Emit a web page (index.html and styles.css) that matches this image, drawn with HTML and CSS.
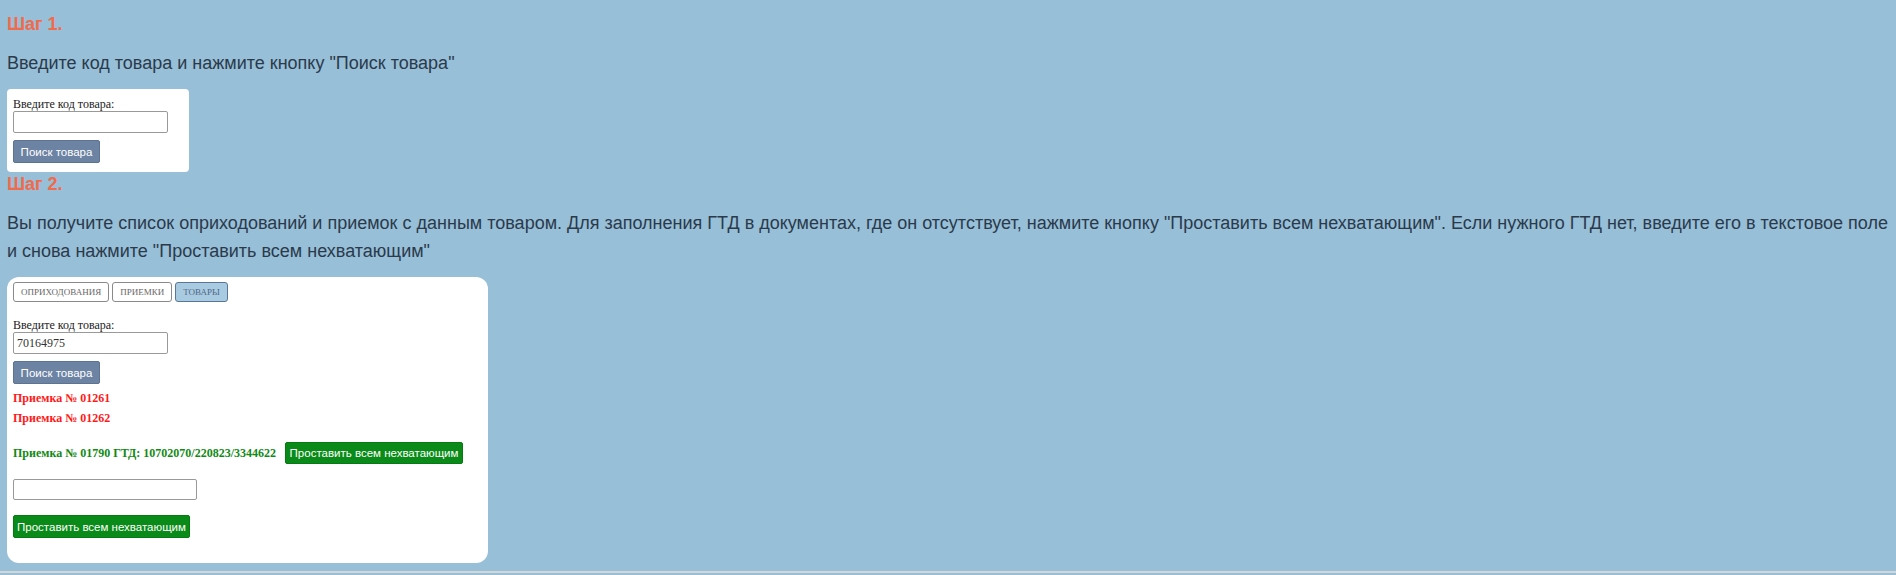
FILE: index.html
```html
<html>
<head>
	<meta http-equiv="Content-Type" content="text/html; charset=utf-8" />
	<title>ГТД</title>
	<link rel="stylesheet" href="styles.css">
</head>
<body>
	<div class="page">
		<div class="step">Шаг 1.</div>
		<div class="hint">Введите код товара и нажмите кнопку "Поиск товара"</div>
		<div class="box box-small">
			<div class="label">Введите код товара:</div>
			<input class="field" type="text" value="">
			<div><button class="btn btn-search">Поиск товара</button></div>
		</div>

		<div class="step step-two">Шаг 2.</div>
		<div class="hint">Вы получите список оприходований и приемок с данным товаром. Для заполнения ГТД в документах, где он отсутствует, нажмите кнопку "Проставить всем нехватающим". Если нужного ГТД нет, введите его в текстовое поле и снова нажмите "Проставить всем нехватающим"</div>
		<div class="box box-big">
			<div class="tabs">
				<div class="tab">Оприходования</div>
				<div class="tab">Приемки</div>
				<div class="tab active">Товары</div>
			</div>
			<div class="label label-gap">Введите код товара:</div>
			<input class="field" type="text" value="70164975">
			<div><button class="btn btn-search">Поиск товара</button></div>

			<div class="doc doc-missing first">Приемка № 01261</div>
			<div class="doc doc-missing">Приемка № 01262</div>
			<div class="doc-row">
				<span class="doc doc-ok">Приемка № 01790 ГТД: 10702070/220823/3344622</span>
				<button class="btn btn-green btn-row">Проставить всем нехватающим</button>
			</div>
			<input class="field field-gtd" type="text" value="">
			<div><button class="btn btn-green btn-all">Проставить всем нехватающим</button></div>
		</div>
	</div>
	<div class="rule"></div>
</body>
</html>
```

FILE: styles.css
```css
body {
	margin: 0;
	background: #97bfd8;
	font-family: 'Liberation Sans', Arial, sans-serif;
}
.page {
	padding: 14px 0 0 7px;
}
.step {
	font-size: 18px;
	font-weight: bold;
	line-height: 20px;
	color: #f26a4c;
}
.step-two {
	margin-top: 2px;
}
.hint {
	margin: 15px 0 12px 0;
	font-size: 18px;
	line-height: 28px;
	color: #2b3a4b;
}
.box {
	background: #ffffff;
	font-family: 'Liberation Serif', 'Times New Roman', serif;
	font-size: 12px;
	color: #222;
}
.box-small {
	width: 170px;
	padding: 8px 6px 9px 6px;
	border-radius: 4px;
}
.box-big {
	width: 469px;
	padding: 5px 6px 25px 6px;
	border-radius: 12px;
}
.label {
	line-height: 14px;
}
.label-gap {
	margin-top: 16px;
}
.field {
	box-sizing: border-box;
	display: block;
	width: 155px;
	height: 22px;
	margin: 0;
	padding: 1px 3px;
	border: 1px solid #999;
	border-radius: 2px;
	font-family: 'Liberation Serif', 'Times New Roman', serif;
	font-size: 12px;
	color: #333;
}
.btn {
	box-sizing: border-box;
	height: 23px;
	margin: 0;
	padding: 0;
	border: 1px solid transparent;
	border-radius: 2px;
	font-family: 'Liberation Sans', Arial, sans-serif;
	font-size: 11.5px;
	white-space: nowrap;
	text-align: center;
	color: #ffffff;
}
.btn-search {
	width: 87px;
	margin-top: 7px;
	background: #6c83a3;
	border-color: #5d7392;
}
.btn-green {
	background: #0a8a18;
	border-color: #087a14;
}
.btn-row {
	width: 178px;
	height: 22px;
}
.tabs {
	display: flex;
	gap: 3px;
}
.tab {
	box-sizing: border-box;
	height: 20px;
	padding: 0 7px;
	line-height: 18px;
	border: 1px solid #8a8a8a;
	border-radius: 3px;
	font-size: 9px;
	text-transform: uppercase;
	color: #666;
}
.tab.active {
	background: #a9cbe2;
	border-color: #5a7896;
	color: #4f6782;
}
.doc {
	font-weight: bold;
	line-height: 15px;
	white-space: nowrap;
}
.doc-missing {
	margin-top: 5px;
	color: #ff1a1a;
}
.doc-missing.first {
	margin-top: 7px;
}
.doc-row {
	display: flex;
	align-items: center;
	gap: 9px;
	margin-top: 16px;
}
.doc-ok {
	color: #118a14;
}
.field-gtd {
	width: 184px;
	height: 21px;
	margin-top: 15px;
}
.btn-all {
	width: 177px;
	margin-top: 15px;
}
.rule {
	margin-top: 8px;
	border-top: 2px solid #d6d6d6;
}
```
